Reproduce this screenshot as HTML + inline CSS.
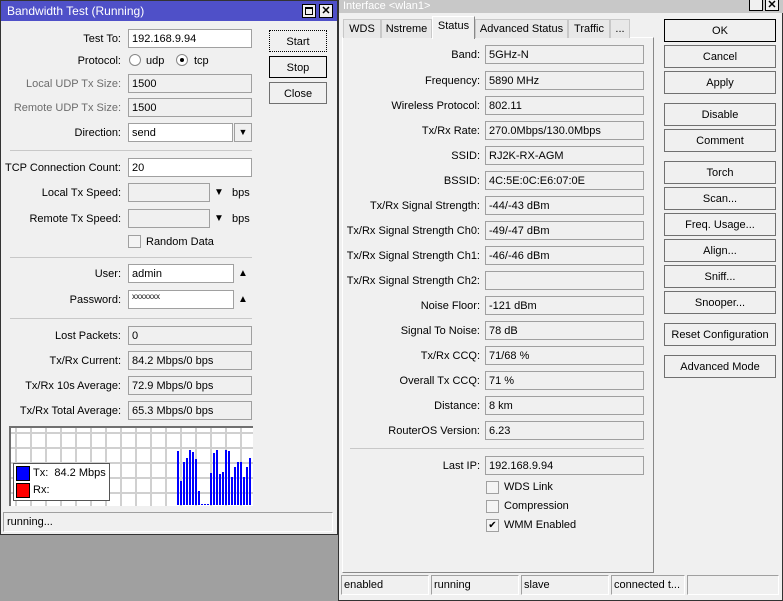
<!DOCTYPE html>
<html><head><meta charset="utf-8"><style>
*{box-sizing:border-box;margin:0;padding:0}
html,body{width:783px;height:601px;overflow:hidden}
body{background:#a0a0a0;position:relative;font-family:"Liberation Sans",sans-serif;font-size:11px;color:#000}
.a{position:absolute}
.win{background:#f0f0f0;border:1px solid #555}
.lbl{position:absolute;text-align:right;white-space:nowrap;line-height:20px}
.g{color:#6d6d6d}
.f{position:absolute;height:19px;border:1px solid #a0a0a0;background:#fff;line-height:18px;padding-left:3px;white-space:nowrap;overflow:hidden}
.fd{background:#f0f0f0}
.btn{position:absolute;border:1px solid #707070;background:#f0f0f0;text-align:center;line-height:22px;white-space:nowrap}
.sep{position:absolute;height:1px;background:#c8c8c8}
.cb{position:absolute;width:13px;height:13px;border:1px solid #a0a0a0;background:#f4f4f4;font-size:10px;line-height:11px;text-align:center}
.tab{position:absolute;top:19px;height:19px;border:1px solid #c8c8c8;border-bottom:none;background:#e8e8e8;line-height:19px;text-align:center;white-space:nowrap}
.sb{position:absolute;top:575px;height:20px;border:1px solid #a0a0a0;border-right-color:#fff;border-bottom-color:#fff;line-height:19px;padding-left:2px;white-space:nowrap;overflow:hidden}
.bar{position:absolute;width:2px;background:#0000ff;bottom:0}
</style></head><body>

<div class="a win" style="left:0;top:0;width:338px;height:535px;border-color:#333"></div>
<div class="a" style="left:1px;top:1px;width:336px;height:20px;background:#4f50c8;color:#fff;font-size:12px;line-height:21px;padding-left:6px">Bandwidth Test (Running)</div>
<div class="a" style="left:302px;top:4px;width:14px;height:14px;border:1px solid #000;background:#f0f0f0"><div class="a" style="left:2px;top:2px;width:8px;height:8px;border:1px solid #000;border-top-width:2px"></div></div>
<div class="a" style="left:319px;top:4px;width:14px;height:14px;border:1px solid #000;background:#f0f0f0;font-size:11px;font-weight:bold;line-height:12px;text-align:center">✕</div>

<div class="lbl" style="right:662px;top:29px">Test To:</div><div class="f" style="left:128px;top:29px;width:124px">192.168.9.94</div>
<div class="lbl" style="right:662px;top:51px">Protocol:</div>
<div class="a" style="left:129px;top:54px;width:12px;height:12px;border-radius:50%;border:1px solid #888;background:#fff"></div><div class="lbl" style="left:146px;top:51px">udp</div>
<div class="a" style="left:176px;top:54px;width:12px;height:12px;border-radius:50%;border:1px solid #888;background:#fff"><div class="a" style="left:3px;top:3px;width:4px;height:4px;background:#000;border-radius:50%"></div></div><div class="lbl" style="left:194px;top:51px">tcp</div>
<div class="lbl g" style="right:662px;top:74px">Local UDP Tx Size:</div><div class="f fd" style="left:128px;top:74px;width:124px">1500</div>
<div class="lbl g" style="right:662px;top:98px">Remote UDP Tx Size:</div><div class="f fd" style="left:128px;top:98px;width:124px">1500</div>
<div class="lbl" style="right:662px;top:123px">Direction:</div><div class="f" style="left:128px;top:123px;width:105px">send</div>
<div class="a" style="left:234px;top:123px;width:18px;height:19px;border:1px solid #a0a0a0;background:#f0f0f0;font-size:9px;text-align:center;line-height:17px">▼</div>
<div class="sep" style="left:10px;top:150px;width:242px"></div>
<div class="lbl" style="right:662px;top:158px">TCP Connection Count:</div><div class="f" style="left:128px;top:158px;width:124px">20</div>
<div class="lbl" style="right:662px;top:183px">Local Tx Speed:</div><div class="f fd" style="left:128px;top:183px;width:82px"></div><div class="lbl" style="left:214px;top:183px;font-size:10px">▼</div><div class="lbl" style="left:232px;top:183px">bps</div>
<div class="lbl" style="right:662px;top:209px">Remote Tx Speed:</div><div class="f fd" style="left:128px;top:209px;width:82px"></div><div class="lbl" style="left:214px;top:209px;font-size:10px">▼</div><div class="lbl" style="left:232px;top:209px">bps</div>
<div class="cb" style="left:128px;top:235px"></div><div class="lbl" style="left:146px;top:232px">Random Data</div>
<div class="sep" style="left:10px;top:257px;width:242px"></div>
<div class="lbl" style="right:662px;top:264px">User:</div><div class="f" style="left:128px;top:264px;width:106px">admin</div><div class="lbl" style="left:238px;top:264px;font-size:10px">▲</div>
<div class="lbl" style="right:662px;top:290px">Password:</div><div class="f" style="left:128px;top:290px;width:106px;font-size:8px;line-height:12px">xxxxxxx</div><div class="lbl" style="left:238px;top:290px;font-size:10px">▲</div>
<div class="sep" style="left:10px;top:318px;width:242px"></div>
<div class="lbl" style="right:662px;top:326px">Lost Packets:</div><div class="f fd" style="left:128px;top:326px;width:124px">0</div>
<div class="lbl" style="right:662px;top:351px">Tx/Rx Current:</div><div class="f fd" style="left:128px;top:351px;width:124px">84.2 Mbps/0 bps</div>
<div class="lbl" style="right:662px;top:376px">Tx/Rx 10s Average:</div><div class="f fd" style="left:128px;top:376px;width:124px">72.9 Mbps/0 bps</div>
<div class="lbl" style="right:662px;top:401px">Tx/Rx Total Average:</div><div class="f fd" style="left:128px;top:401px;width:124px">65.3 Mbps/0 bps</div>

<div class="btn" style="left:269px;top:30px;width:58px;height:22px;border-style:dotted;border-color:#000">Start</div>
<div class="btn" style="left:269px;top:56px;width:58px;height:22px;border-color:#000">Stop</div>
<div class="btn" style="left:269px;top:82px;width:58px;height:22px">Close</div>

<div class="a" style="left:9px;top:426px;width:244px;height:80px;background:#fff;border-top:2px solid #707070;border-left:2px solid #707070;overflow:hidden;
background-image:linear-gradient(#d0d0d0 2px,transparent 2px),linear-gradient(90deg,#d0d0d0 2px,transparent 2px);background-size:15px 15px;background-position:4px 4px">
<div class="a" style="left:163px;bottom:1px;width:80px;height:60px">
<div class="bar" style="left:3px;height:54px"></div><div class="bar" style="left:6px;height:24px"></div><div class="bar" style="left:9px;height:43px"></div><div class="bar" style="left:12px;height:47px"></div><div class="bar" style="left:15px;height:55px"></div><div class="bar" style="left:18px;height:53px"></div><div class="bar" style="left:21px;height:46px"></div><div class="bar" style="left:24px;height:14px"></div><div class="bar" style="left:27px;height:1px"></div><div class="bar" style="left:30px;height:1px"></div><div class="bar" style="left:33px;height:1px"></div><div class="bar" style="left:36px;height:32px"></div><div class="bar" style="left:39px;height:52px"></div><div class="bar" style="left:42px;height:55px"></div><div class="bar" style="left:45px;height:31px"></div><div class="bar" style="left:48px;height:33px"></div><div class="bar" style="left:51px;height:55px"></div><div class="bar" style="left:54px;height:54px"></div><div class="bar" style="left:57px;height:28px"></div><div class="bar" style="left:60px;height:38px"></div><div class="bar" style="left:63px;height:43px"></div><div class="bar" style="left:66px;height:43px"></div><div class="bar" style="left:69px;height:28px"></div><div class="bar" style="left:72px;height:38px"></div><div class="bar" style="left:75px;height:47px"></div>
</div>
<div class="a" style="left:2px;top:35px;width:97px;height:38px;border:1px solid #555;background:#fff">
<div class="a" style="left:2px;top:2px;width:14px;height:15px;background:#00f;border:1px solid #000"></div><div class="lbl" style="left:19px;top:0;line-height:19px">Tx:&nbsp; 84.2 Mbps</div>
<div class="a" style="left:2px;top:19px;width:14px;height:15px;background:#f00;border:1px solid #000"></div><div class="lbl" style="left:19px;top:17px;line-height:19px">Rx:</div>
</div></div>
<div class="a" style="left:3px;top:512px;width:330px;height:20px;border:1px solid #a0a0a0;border-right-color:#fff;border-bottom-color:#fff;line-height:19px;padding-left:3px">running...</div>

<div class="a win" style="left:338px;top:0;width:445px;height:601px;border-color:#333"></div>
<div class="a" style="left:339px;top:0;width:444px;height:13px;background:#c8c8c8;color:#fff;font-size:11px;line-height:12px;padding-left:4px">Interface &lt;wlan1&gt;</div>
<div class="a" style="left:749px;top:-3px;width:14px;height:14px;border:1px solid #000;background:#f0f0f0"></div>
<div class="a" style="left:765px;top:-3px;width:14px;height:14px;border:1px solid #000;background:#f0f0f0;font-weight:bold;text-align:center;line-height:14px">✕</div>

<div class="a" style="left:342px;top:37px;width:312px;height:536px;border:1px solid #a0a0a0;border-top-color:#fff;border-left-color:#fff;border-right-color:#888;border-bottom-color:#888"></div>
<div class="tab" style="left:343px;width:38px">WDS</div>
<div class="tab" style="left:381px;width:51px">Nstreme</div>
<div class="tab" style="left:475px;width:93px">Advanced Status</div>
<div class="tab" style="left:568px;width:42px">Traffic</div>
<div class="tab" style="left:610px;width:20px">...</div>
<div class="tab" style="left:432px;top:16px;height:23px;width:43px;background:#f0f0f0;border-color:#fff #888 transparent #fff">Status</div>

<div class="lbl" style="right:303px;top:45px">Band:</div><div class="f fd" style="left:485px;top:45px;width:159px">5GHz-N</div>
<div class="lbl" style="right:303px;top:71px">Frequency:</div><div class="f fd" style="left:485px;top:71px;width:159px">5890 MHz</div>
<div class="lbl" style="right:303px;top:96px">Wireless Protocol:</div><div class="f fd" style="left:485px;top:96px;width:159px">802.11</div>
<div class="lbl" style="right:303px;top:121px">Tx/Rx Rate:</div><div class="f fd" style="left:485px;top:121px;width:159px">270.0Mbps/130.0Mbps</div>
<div class="lbl" style="right:303px;top:146px">SSID:</div><div class="f fd" style="left:485px;top:146px;width:159px">RJ2K-RX-AGM</div>
<div class="lbl" style="right:303px;top:171px">BSSID:</div><div class="f fd" style="left:485px;top:171px;width:159px">4C:5E:0C:E6:07:0E</div>
<div class="lbl" style="right:303px;top:196px">Tx/Rx Signal Strength:</div><div class="f fd" style="left:485px;top:196px;width:159px">-44/-43 dBm</div>
<div class="lbl" style="right:303px;top:221px">Tx/Rx Signal Strength Ch0:</div><div class="f fd" style="left:485px;top:221px;width:159px">-49/-47 dBm</div>
<div class="lbl" style="right:303px;top:246px">Tx/Rx Signal Strength Ch1:</div><div class="f fd" style="left:485px;top:246px;width:159px">-46/-46 dBm</div>
<div class="lbl" style="right:303px;top:271px">Tx/Rx Signal Strength Ch2:</div><div class="f fd" style="left:485px;top:271px;width:159px"></div>
<div class="lbl" style="right:303px;top:296px">Noise Floor:</div><div class="f fd" style="left:485px;top:296px;width:159px">-121 dBm</div>
<div class="lbl" style="right:303px;top:321px">Signal To Noise:</div><div class="f fd" style="left:485px;top:321px;width:159px">78 dB</div>
<div class="lbl" style="right:303px;top:346px">Tx/Rx CCQ:</div><div class="f fd" style="left:485px;top:346px;width:159px">71/68 %</div>
<div class="lbl" style="right:303px;top:371px">Overall Tx CCQ:</div><div class="f fd" style="left:485px;top:371px;width:159px">71 %</div>
<div class="lbl" style="right:303px;top:396px">Distance:</div><div class="f fd" style="left:485px;top:396px;width:159px">8 km</div>
<div class="lbl" style="right:303px;top:421px">RouterOS Version:</div><div class="f fd" style="left:485px;top:421px;width:159px">6.23</div>
<div class="sep" style="left:350px;top:448px;width:294px"></div>
<div class="lbl" style="right:303px;top:456px">Last IP:</div><div class="f fd" style="left:485px;top:456px;width:159px">192.168.9.94</div>
<div class="cb" style="left:486px;top:481px"></div><div class="lbl" style="left:504px;top:477px">WDS Link</div>
<div class="cb" style="left:486px;top:500px"></div><div class="lbl" style="left:504px;top:496px">Compression</div>
<div class="cb" style="left:486px;top:519px">✔</div><div class="lbl" style="left:504px;top:515px">WMM Enabled</div>

<div class="btn" style="left:664px;top:19px;width:112px;height:23px;border-color:#000">OK</div>
<div class="btn" style="left:664px;top:45px;width:112px;height:23px">Cancel</div>
<div class="btn" style="left:664px;top:71px;width:112px;height:23px">Apply</div>
<div class="btn" style="left:664px;top:103px;width:112px;height:23px">Disable</div>
<div class="btn" style="left:664px;top:129px;width:112px;height:23px">Comment</div>
<div class="btn" style="left:664px;top:161px;width:112px;height:23px">Torch</div>
<div class="btn" style="left:664px;top:187px;width:112px;height:23px">Scan...</div>
<div class="btn" style="left:664px;top:213px;width:112px;height:23px">Freq. Usage...</div>
<div class="btn" style="left:664px;top:239px;width:112px;height:23px">Align...</div>
<div class="btn" style="left:664px;top:265px;width:112px;height:23px">Sniff...</div>
<div class="btn" style="left:664px;top:291px;width:112px;height:23px">Snooper...</div>
<div class="btn" style="left:664px;top:323px;width:112px;height:23px">Reset Configuration</div>
<div class="btn" style="left:664px;top:355px;width:112px;height:23px">Advanced Mode</div>

<div class="sb" style="left:341px;width:88px">enabled</div>
<div class="sb" style="left:431px;width:88px">running</div>
<div class="sb" style="left:521px;width:88px">slave</div>
<div class="sb" style="left:611px;width:74px">connected t...</div>
<div class="sb" style="left:687px;width:92px"></div>
</body></html>
